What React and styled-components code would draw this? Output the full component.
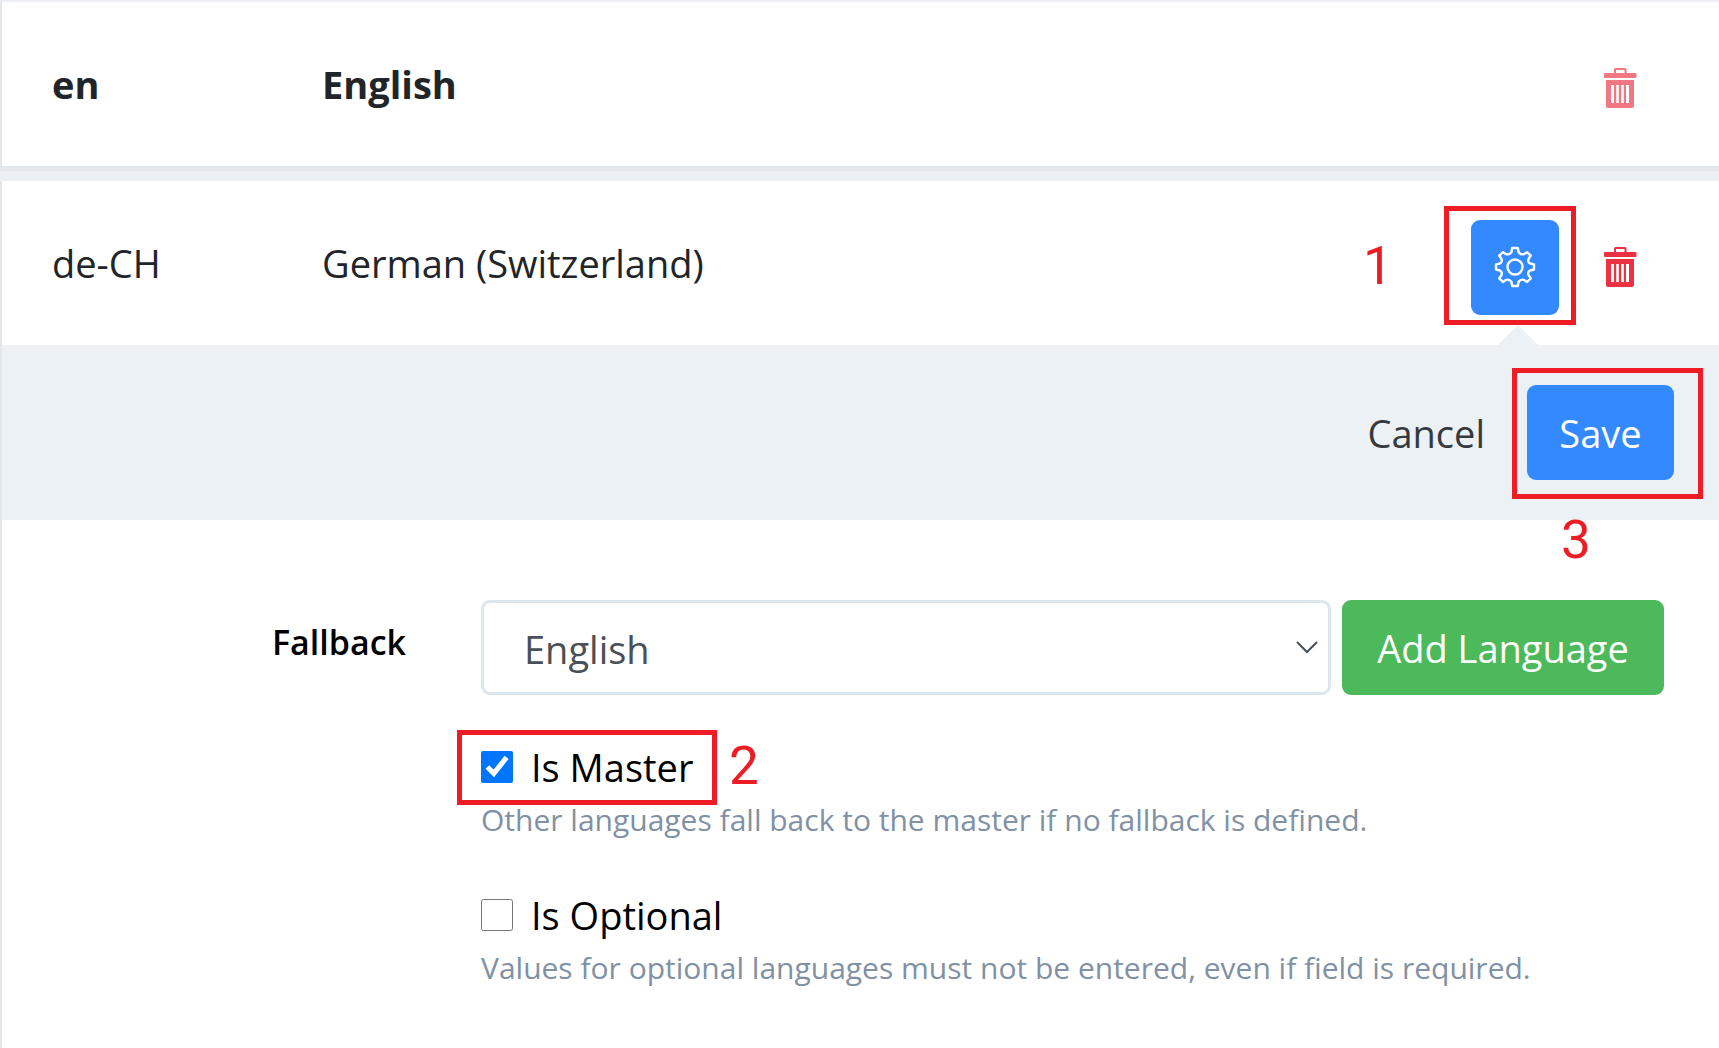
import React, { useState } from "react";
import styled, { createGlobalStyle } from "styled-components";

const GlobalStyle = createGlobalStyle`
  *, *::before, *::after { box-sizing: border-box; }
  body {
    margin: 0;
    background: #ecf0f4;
    color: #212529;
    font-family: "Segoe UI", "Open Sans", "Noto Sans", sans-serif;
    font-size: 38px;
    line-height: 56px;
  }
  button, select, input { font: inherit; }
`;

const Page = styled.main`
  display: flex;
  flex-direction: column;
  gap: 10px;
  min-height: 100vh;
  padding-top: 2px;
`;

const Card = styled.section`
  background: #fff;
  border-left: 2px solid #e2e7eb;
  flex-grow: ${(p) => (p.$fill ? 1 : 0)};
  border-bottom: ${(p) => (p.$fill ? "0" : "5px solid #e2e7eb")};
`;

const Summary = styled.header`
  display: grid;
  grid-template-columns: 270px 1fr auto;
  align-items: center;
  height: 164px;
  padding: 0 55px 0 50px;
  font-weight: ${(p) => (p.$strong ? 700 : 400)};
`;

const Actions = styled.div`
  display: flex;
  align-items: center;
  padding-top: 8px;
`;

const Anchor = styled.div`
  position: relative;
  display: flex;
`;

const Button = styled.button`
  display: flex;
  align-items: center;
  justify-content: center;
  height: 95px;
  min-width: ${(p) => p.$minWidth || 0}px;
  padding: 0 24px;
  border: 0;
  border-radius: 9px;
  white-space: nowrap;
  cursor: pointer;
  color: ${(p) => (p.$bg ? "#fff" : "#343a40")};
  background: ${(p) => p.$bg || "transparent"};
`;

const GearButton = styled(Button)`
  width: 88px;
  padding: 0;
`;

const TrashButton = styled(Button)`
  width: 88px;
  margin-left: 17px;
  padding: 0;
  color: #eb3142;
  opacity: ${(p) => (p.disabled ? 0.65 : 1)};
`;

const Frame = styled.span`
  position: absolute;
  inset: ${(p) => p.$inset};
  border: 5px solid #ee1c24;
  pointer-events: none;
`;

const Step = styled.span`
  position: absolute;
  top: ${(p) => p.$top};
  left: ${(p) => p.$left};
  color: #ee1c24;
  font-family: Roboto, Arial, sans-serif;
  font-size: 53px;
  line-height: 60px;
`;

const Toolbar = styled.div`
  position: relative;
  display: flex;
  justify-content: flex-end;
  gap: 18px;
  padding: 40px 45px;
  background: #ecf1f5;

  &::before {
    content: "";
    position: absolute;
    right: 181px;
    bottom: 100%;
    border: 20px solid transparent;
    border-top-width: 0;
    border-bottom-color: #ecf1f5;
  }
`;

const Form = styled.form`
  display: grid;
  grid-template-columns: 404px 1fr;
  column-gap: 75px;
  padding: 80px 55px 0 0;
`;

const FieldLabel = styled.label`
  padding-top: 14px;
  color: #000;
  font-size: 34px;
  font-weight: 600;
  text-align: right;
`;

const Fields = styled.div`
  display: flex;
  flex-direction: column;
`;

const InputRow = styled.div`
  display: flex;
  gap: 11px;
  margin-bottom: 44px;
`;

const SelectBox = styled.div`
  position: relative;
  flex: 1;

  svg {
    position: absolute;
    right: 13px;
    top: 36px;
    pointer-events: none;
  }
`;

const Select = styled.select`
  appearance: none;
  width: 100%;
  height: 95px;
  padding: 2px 40px 0;
  border: 3px solid #dee6ed;
  border-radius: 9px;
  background: #fff;
  color: #495057;
`;

const Check = styled.div`
  margin-bottom: 42px;
`;

const CheckLine = styled.div`
  position: relative;
  display: flex;
  align-items: center;
  gap: 18px;
  width: max-content;
  height: 56px;
  color: #000;
`;

const Checkbox = styled.input`
  width: 32px;
  height: 32px;
  margin: 0;
`;

const Hint = styled.p`
  margin: 0;
  color: #8091a5;
  font-size: 30px;
  line-height: 50px;
`;

const TrashIcon = () => (
  <svg width="34" height="42" viewBox="0 0 34 42" aria-hidden="true">
    <path
      fill="currentColor"
      fillRule="evenodd"
      d="M11 6V2.500Q11 1 12.500 1H22Q23.500 1 23.500 2.500V6H32.500Q33.500 6 33.500 7V10Q33.500 11 32.500 11H2Q1 11 1 10V7Q1 6 2 6ZM13 6H21.500V3H13ZM3 13H31V39Q31 41 29 41H5Q3 41 3 39ZM8 18V36H11V18ZM13.200 18V36H15.800V18ZM18.200 18V36H20.800V18ZM23 18V36H26V18Z"
    />
  </svg>
);

const GearIcon = () => (
  <svg width="42" height="42" viewBox="0 0 42 42" fill="none" stroke="currentColor" strokeWidth="2.400" strokeLinejoin="round" aria-hidden="true">
    <circle cx="21" cy="21" r="7.500" />
    <path d="M18.200 2H23.800L24.600 6.200Q27 9.500 30.500 7.800L33 6.200L36.800 9.600L34.600 12.800Q33.200 16.500 37 17.800L40 18.400V23.600L37 24.200Q33.200 25.500 34.600 29.200L36.800 32.400L33 36L30.500 34.200Q27 32.500 24.600 35.800L23.800 40H18.200L17.400 35.800Q15 32.500 11.500 34.200L9 36L5.200 32.400L7.400 29.200Q8.800 25.500 5 24.200L2 23.600V18.400L5 17.800Q8.800 16.500 7.400 12.800L5.200 9.600L9 6.200L11.500 7.800Q15 9.500 17.400 6.200Z" />
  </svg>
);

const Chevron = () => (
  <svg width="22" height="22" viewBox="0 0 22 22" fill="none" stroke="#495057" strokeWidth="2" aria-hidden="true">
    <path d="M1 6L11 16L21 6" />
  </svg>
);

export default function App() {
  const [master, setMaster] = useState(true);
  const [optional, setOptional] = useState(false);

  return (
    <>
      <GlobalStyle />
      <Page>
        <Card>
          <Summary $strong>
            <span>en</span>
            <span>English</span>
            <Actions>
              <TrashButton type="button" aria-label="Delete English" disabled>
                <TrashIcon />
              </TrashButton>
            </Actions>
          </Summary>
        </Card>
        <Card $fill>
          <Summary>
            <span>de-CH</span>
            <span>German (Switzerland)</span>
            <Actions>
              <Anchor>
                <GearButton type="button" aria-label="Settings" $bg="#3389ff">
                  <GearIcon />
                </GearButton>
                <Frame $inset="-14px -17px -10px -27px" />
                <Step $top="16px" $left="-108px">1</Step>
              </Anchor>
              <TrashButton type="button" aria-label="Delete German">
                <TrashIcon />
              </TrashButton>
            </Actions>
          </Summary>
          <Toolbar>
            <Button type="button">Cancel</Button>
            <Anchor>
              <Button type="submit" form="language" $bg="#3389ff" $minWidth={147}>Save</Button>
              <Frame $inset="-17px -29px -19px -15px" />
              <Step $top="125px" $left="34px">3</Step>
            </Anchor>
          </Toolbar>
          <Form id="language" onSubmit={(e) => e.preventDefault()}>
            <FieldLabel htmlFor="fallback">Fallback</FieldLabel>
            <Fields>
              <InputRow>
                <SelectBox>
                  <Select id="fallback" defaultValue="en">
                    <option value="en">English</option>
                  </Select>
                  <Chevron />
                </SelectBox>
                <Button type="button" $bg="#4cb95a" $minWidth={322}>Add Language</Button>
              </InputRow>
              <Check>
                <CheckLine>
                  <Checkbox id="master" type="checkbox" checked={master} onChange={(e) => setMaster(e.target.checked)} />
                  <label htmlFor="master">Is Master</label>
                  <Frame $inset="-9px -24px -10px -24px" />
                  <Step $top="-3px" $left="248px">2</Step>
                </CheckLine>
                <Hint>Other languages fall back to the master if no fallback is defined.</Hint>
              </Check>
              <Check>
                <CheckLine>
                  <Checkbox id="optional" type="checkbox" checked={optional} onChange={(e) => setOptional(e.target.checked)} />
                  <label htmlFor="optional">Is Optional</label>
                </CheckLine>
                <Hint>Values for optional languages must not be entered, even if field is required.</Hint>
              </Check>
            </Fields>
          </Form>
        </Card>
      </Page>
    </>
  );
}
